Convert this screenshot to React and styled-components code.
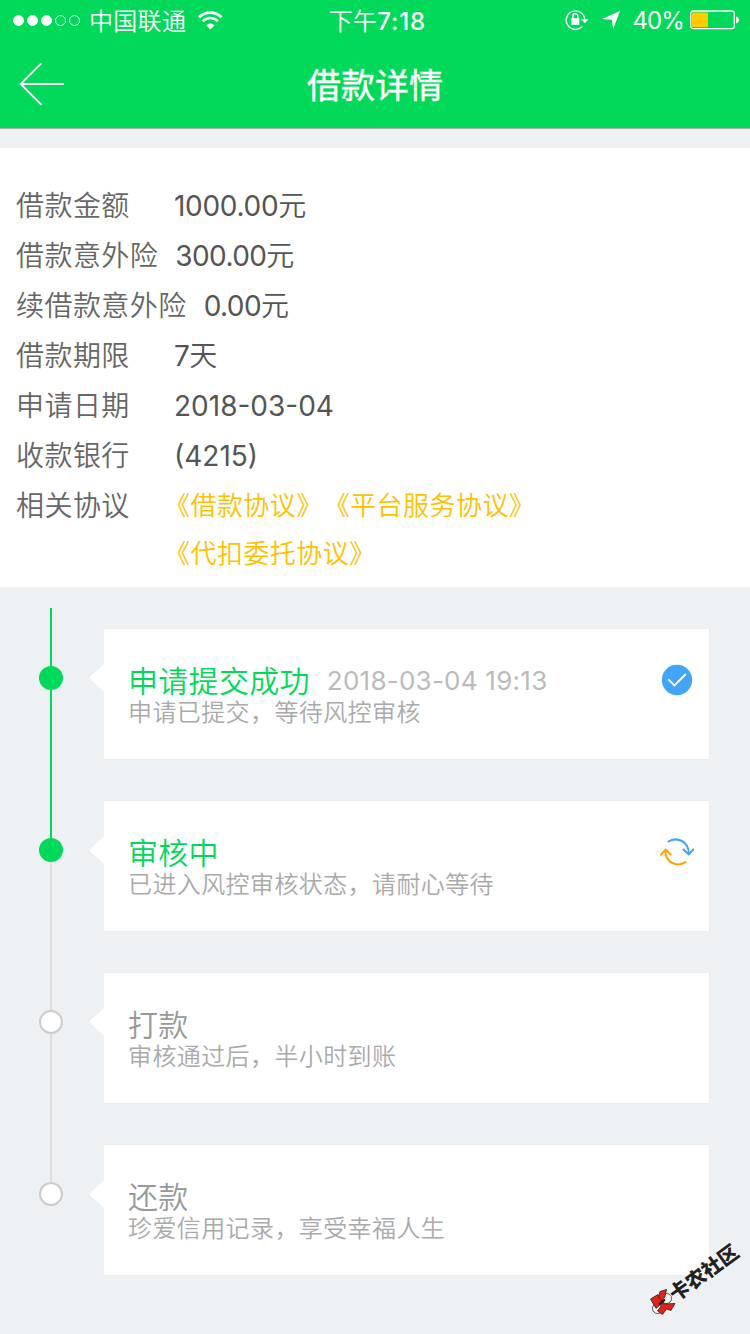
import React from "react";
import styled, { createGlobalStyle } from "styled-components";

const GlobalStyle = createGlobalStyle`
    body {
        margin: 0;
        background: #edf1f4;
    }

    * {
        box-sizing: border-box;
    }
`;

const Page = styled.div`
    position: relative;
    display: flex;
    flex-direction: column;
    width: 750px;
    height: 1334px;
    overflow: hidden;
    background: #edf1f4;
    font-family: Inter, "Noto Sans CJK SC", sans-serif;
    font-weight: 350;
    white-space: nowrap;
`;

const Header = styled.div`
    height: 129px;
    background: #02d95a;
    border-bottom: 1px solid #a4aea8;
    color: #ffffff;
`;

const StatusBar = styled.div`
    display: grid;
    grid-template-columns: 1fr auto 1fr;
    align-items: center;
    height: 40px;
    padding: 0 11px 0 13px;
    font-size: 24px;
    line-height: 36px;
`;

const StatusLeft = styled.div`
    display: flex;
    align-items: center;
`;

const StatusRight = styled.div`
    display: flex;
    align-items: center;
    justify-content: flex-end;
`;

const Signal = styled.div`
    display: flex;
    gap: 3px;
    margin-right: 9px;
`;

const SignalDot = styled.span`
    width: 11px;
    height: 11px;
    border-radius: 50%;
    border: 1px solid #ffffff;
    background: ${(props) => (props.$on ? "#ffffff" : "transparent")};
`;

const Carrier = styled.span`
    padding-top: 3px;
    margin-right: 12px;
    letter-spacing: 0.3px;
`;

const Time = styled.div`
    padding: 3px 0 0 3px;
    letter-spacing: 0.2px;

    b {
        font-weight: 500;
        letter-spacing: 0.9px;
    }
`;

const Percent = styled.span`
    padding-top: 2px;
    margin: 0 6px 0 12px;
    font-weight: 400;
    letter-spacing: -0.9px;
`;

const NavBar = styled.div`
    display: grid;
    grid-template-columns: 1fr auto 1fr;
    align-items: center;
    height: 88px;
    padding: 0 19px;
`;

const Title = styled.div`
    padding-top: 4px;
    font-size: 34px;
    font-weight: 400;
    line-height: 84px;
    -webkit-text-stroke: 0.4px #ffffff;
`;

const Details = styled.div`
    height: 439px;
    margin-top: 19px;
    padding: 33px 16px 0;
    background: #ffffff;
`;

const DetailRow = styled.div`
    display: flex;
    height: 50px;
    font-size: 28px;
    line-height: 50px;
`;

const Label = styled.div`
    min-width: 158px;
    padding-right: ${(props) => props.$gap || 0}px;
    color: #666666;
    letter-spacing: 0.45px;
`;

const Value = styled.div`
    color: #555555;
    font-weight: 400;
    letter-spacing: ${(props) => props.$spacing || 0}px;
`;

const Unit = styled.span`
    font-weight: 350;
`;

const Links = styled.div`
    padding-top: 1px;
    margin-left: -10px;
    font-size: 26px;
    line-height: 48px;
    letter-spacing: 0.45px;
`;

const Agreement = styled.a`
    margin-right: 14px;
    color: #ffc000;
`;

const Timeline = styled.div`
    padding: 21px 41px 0 39px;
`;

const Step = styled.div`
    display: flex;
    height: 172px;
`;

const Rail = styled.div`
    display: flex;
    flex-direction: column;
    align-items: center;
    width: 24px;
    margin-right: 26px;
`;

const Line = styled.div`
    width: 2px;
    height: ${(props) => props.$height}px;
    background: ${(props) => (props.$active ? "#02d95a" : "#dcdcdc")};
`;

const Dot = styled.div`
    width: 24px;
    height: 24px;
    border-radius: 50%;
    border: 2px solid ${(props) => (props.$active ? "#02d95a" : "#cccccc")};
    background: ${(props) => (props.$active ? "#02d95a" : "#ffffff")};
`;

const Arrow = styled.div`
    width: 15px;
    height: 28px;
    margin-top: 56px;
    background: #ffffff;
    clip-path: polygon(100% 0, 0 50%, 100% 100%);
`;

const Card = styled.div`
    display: flex;
    justify-content: space-between;
    flex: 1;
    height: 130px;
    margin-top: 21px;
    padding: 35px 15px 0 24px;
    background: #ffffff;
    box-shadow: 0 0 0 1px #ececec;
    clip-path: inset(-1px -1px -1px 0);
`;

const StepTitle = styled.div`
    display: flex;
    align-items: center;
    height: 32px;
    line-height: 32px;
    padding-top: 1px;
    font-size: 30px;
    letter-spacing: 0.3px;
    color: ${(props) => (props.$active ? "#02d95a" : "#999999")};
`;

const StepTime = styled.span`
    margin-left: 17px;
    font-size: 26px;
    font-weight: 400;
    letter-spacing: 0.25px;
    color: #bbbbbb;
`;

const StepText = styled.div`
    height: 32px;
    font-size: 24px;
    line-height: 34px;
    letter-spacing: 0.4px;
    color: #aaaaaa;
`;

const StepIcon = styled.div`
    width: 34px;
    height: 32px;
`;

const Watermark = styled.div`
    position: absolute;
    left: 649px;
    top: 1260px;
    display: flex;
    color: #222222;
    font-size: 20px;
    font-weight: 900;
    line-height: 26px;
    text-shadow: 0 0 2px #ffffff, 0 0 2px #ffffff;

    svg {
        margin: 28px -15px 0 0;
    }
`;

const WatermarkText = styled.div`
    width: 80px;
    height: 26px;
    transform: rotate(-36deg);
`;

const WifiIcon = () => (
    <svg width="25" height="19" viewBox="0 0 25 19" fill="none" stroke="#fff">
        <path d="M1 6.2a16 16 0 0 1 22.6 0" strokeWidth="2.7" />
        <path d="M4.7 10.2a10.8 10.8 0 0 1 15.2 0" strokeWidth="2.6" />
        <path d="M12.3 18.5l-4.2-4.3a6 6 0 0 1 8.4 0z" fill="#fff" stroke="none" />
    </svg>
);

const LockIcon = () => (
    <svg width="24" height="22" viewBox="0 0 24 22" fill="none" stroke="#fff">
        <path d="M17.3 17.6A9.3 9.3 0 1 1 19.8 10.5" strokeWidth="1.4" />
        <path d="M16 10.2h7.6l-3.8 4z" fill="#fff" stroke="none" />
        <rect x="6.3" y="9.2" width="8" height="6.6" fill="#fff" stroke="none" />
        <path d="M7.8 9.5V7.3a2.5 2.5 0 0 1 5 0v2.2" strokeWidth="1.5" />
    </svg>
);

const LocationIcon = () => (
    <svg width="31" height="18" viewBox="0 0 31 18">
        <path d="M31 0L24.2 18l-1.4-9.3L13 8z" fill="#fff" />
    </svg>
);

const BatteryIcon = () => (
    <svg width="49" height="20" viewBox="0 0 49 20">
        <rect x="0.7" y="1" width="43.6" height="17.6" rx="2.6" fill="none" stroke="#fff" strokeWidth="1.3" />
        <rect x="2" y="2.5" width="16" height="14.6" rx="1" fill="#ffcc00" />
        <path d="M46 6.5c4 .8 4 6 0 6.8z" fill="#fff" />
    </svg>
);

const BackIcon = () => (
    <svg width="46" height="44" viewBox="0 0 46 44" fill="none" stroke="#fff" strokeWidth="1.9">
        <path d="M22.5 1.2L1.7 22l20.8 20.8M1.7 22H45" />
    </svg>
);

const CheckIcon = () => (
    <svg width="34" height="32" viewBox="0 0 34 32">
        <circle cx="17" cy="16" r="15.2" fill="#43a5f8" />
        <path d="M8.3 15.3l6.1 6.1L25.8 10" fill="none" stroke="#fff" strokeWidth="1.8" />
    </svg>
);

const RefreshIcon = () => (
    <svg width="34" height="32" viewBox="0 0 34 32" fill="none" strokeWidth="2" strokeLinecap="round" strokeLinejoin="round">
        <g stroke="#43a5f8">
            <path d="M8.5 5.5C17 .5 29 5 28.8 18" />
            <path d="M23.5 13.5l5.2 5 4.6-5.2" />
        </g>
        <g stroke="#ffa200">
            <path d="M25.6 26.2C17 31.5 5 27 5.4 14" />
            <path d="M.9 18.8l4.6-5.2 5.2 4.8" />
        </g>
    </svg>
);

const MarkIcon = () => (
    <svg width="30" height="30" viewBox="0 0 30 30" stroke="#222" strokeWidth="0.8">
        <circle cx="17.5" cy="10.5" r="5" fill="#fff" />
        <circle cx="8.5" cy="20.5" r="5" fill="#fff" />
        <path d="M1.5 11l7.5-4.5 6 7-8 7z" fill="#e22319" />
        <path d="M11 3.5l6.500-2-1.500 7-3 5-3.500-4.500z" fill="#e22319" />
        <path d="M11.500 14.500l4.500 1.500 10-.5-4 7-4.500-1.500-4 5.500-5-3.500 3.500-5z" fill="#e22319" />
        <path d="M10 16.5l6-5" strokeWidth="2" />
    </svg>
);

const details = [
    { label: "借款金额", value: "1000.00", unit: "元", spacing: -0.3 },
    { label: "借款意外险", value: "300.00", unit: "元", gap: 17, spacing: -0.6 },
    { label: "续借款意外险", value: "0.00", unit: "元", gap: 17, spacing: -0.6 },
    { label: "借款期限", value: "7", unit: "天", spacing: -0.6 },
    { label: "申请日期", value: "2018-03-04" },
    { label: "收款银行", value: "(4215)" },
];

const steps = [
    {
        title: "申请提交成功",
        time: "2018-03-04 19:13",
        text: "申请已提交，等待风控审核",
        active: true,
        nextActive: true,
        icon: <CheckIcon />,
    },
    {
        title: "审核中",
        text: "已进入风控审核状态，请耐心等待",
        active: true,
        icon: <RefreshIcon />,
    },
    { title: "打款", text: "审核通过后，半小时到账" },
    { title: "还款", text: "珍爱信用记录，享受幸福人生", last: true },
];

const App = () => {
    return (
        <Page>
            <GlobalStyle />
            <Header>
                <StatusBar>
                    <StatusLeft>
                        <Signal>
                            {[1, 2, 3, 4, 5].map((n) => (
                                <SignalDot key={n} $on={n <= 3} />
                            ))}
                        </Signal>
                        <Carrier>中国联通</Carrier>
                        <WifiIcon />
                    </StatusLeft>
                    <Time>下午<b>7:18</b></Time>
                    <StatusRight>
                        <LockIcon />
                        <LocationIcon />
                        <Percent>40%</Percent>
                        <BatteryIcon />
                    </StatusRight>
                </StatusBar>
                <NavBar>
                    <BackIcon />
                    <Title>借款详情</Title>
                </NavBar>
            </Header>

            <Details>
                {details.map((item) => (
                    <DetailRow key={item.label}>
                        <Label $gap={item.gap}>{item.label}</Label>
                        <Value $spacing={item.spacing}>
                            {item.value}
                            {item.unit && <Unit>{item.unit}</Unit>}
                        </Value>
                    </DetailRow>
                ))}
                <DetailRow>
                    <Label>相关协议</Label>
                    <Links>
                        <Agreement>《借款协议》</Agreement>
                        <Agreement>《平台服务协议》</Agreement>
                        <br />
                        <Agreement>《代扣委托协议》</Agreement>
                    </Links>
                </DetailRow>
            </Details>

            <Timeline>
                {steps.map((step) => (
                    <Step key={step.title}>
                        <Rail>
                            <Line $height={58} $active={step.active} />
                            <Dot $active={step.active} />
                            {!step.last && <Line $height={90} $active={step.nextActive} />}
                        </Rail>
                        <Arrow />
                        <Card>
                            <div>
                                <StepTitle $active={step.active}>
                                    {step.title}
                                    {step.time && <StepTime>{step.time}</StepTime>}
                                </StepTitle>
                                <StepText>{step.text}</StepText>
                            </div>
                            <StepIcon>{step.icon}</StepIcon>
                        </Card>
                    </Step>
                ))}
            </Timeline>

            <Watermark>
                <MarkIcon />
                <WatermarkText>卡农社区</WatermarkText>
            </Watermark>
        </Page>
    );
};

export default App;
